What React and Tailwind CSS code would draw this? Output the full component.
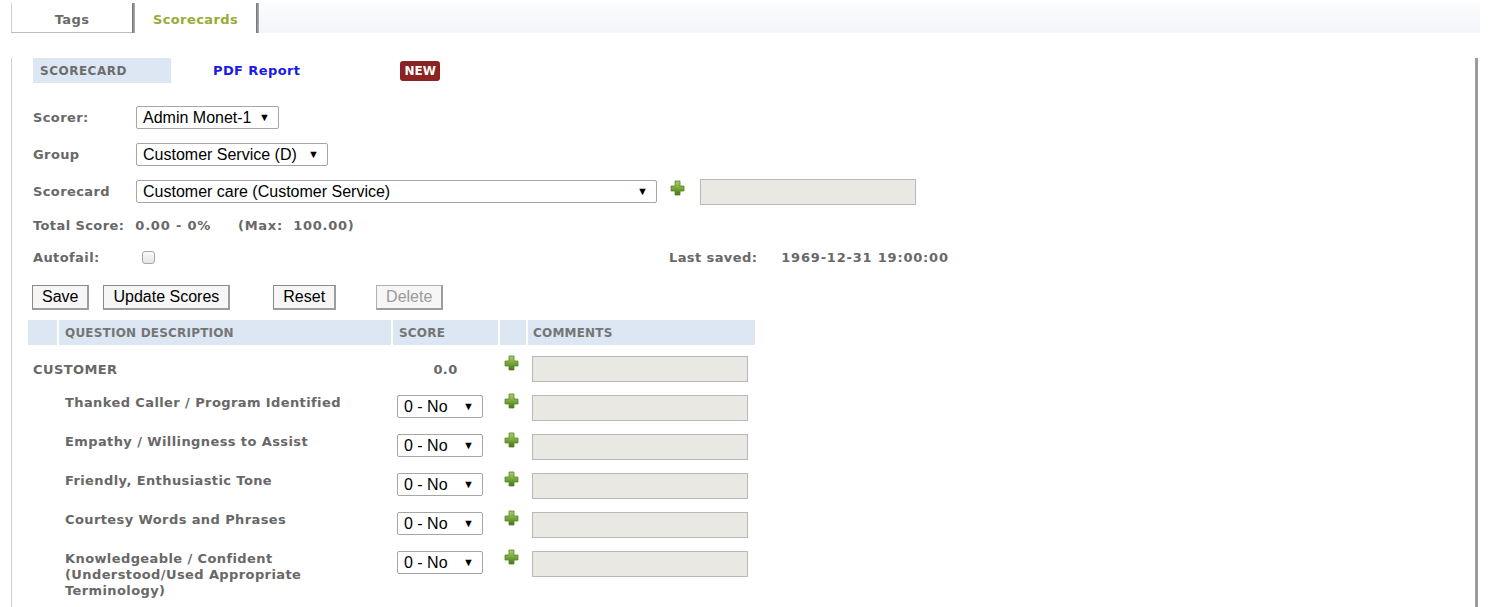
import React from 'react';

// shared font stacks
const verdana = "font-['DejaVu_Sans',Verdana,sans-serif]";
const arial = "font-['Liberation_Sans',Arial,sans-serif]";

const questions = [
  'Thanked Caller / Program Identified',
  'Empathy / Willingness to Assist',
  'Friendly, Enthusiastic Tone',
  'Courtesy Words and Phrases',
  'Knowledgeable / Confident (Understood/Used Appropriate Terminology)',
];

const PlusIcon = () => (
  <svg width="15" height="16" viewBox="0 0 15 16">
    <defs>
      <linearGradient id="plusGrad" x1="0" y1="0" x2="0" y2="1">
        <stop offset="0" stopColor="#a9cf68" />
        <stop offset="0.5" stopColor="#7aa83c" />
        <stop offset="1" stopColor="#44731a" />
      </linearGradient>
    </defs>
    <path d="M5 1h5v5h4v5h-4v4H5v-4H1V6h4z" fill="url(#plusGrad)" stroke="#56852a" strokeWidth="0.8" />
  </svg>
);

const FakeSelect = ({ value, width }) => (
  <div
    className={`flex items-center justify-between h-[23px] bg-white border border-[#a6a6a6] rounded-[2px] pl-[6px] pr-[8px] text-[16px] font-normal tracking-normal text-black ${arial}`}
    style={{ width }}
  >
    <span className="leading-none">{value}</span>
    <span className="text-[11px] leading-none">▼</span>
  </div>
);

const GrayInput = ({ width = 216, height = 26 }) => (
  <div className="bg-[#e9e8e2] border border-[#b8b8b8]" style={{ width, height }} />
);

const Button = ({ children, disabled }) => (
  <button
    className={`h-[25px] px-[9px] bg-[#f6f6f6] border border-[#8a8a8a] border-r-2 border-b-2 border-r-[#9d9d9d] border-b-[#9d9d9d] text-[16px] leading-none ${arial} ${
      disabled ? 'text-[#9a9a9a] border-[#b0b0b0]' : 'text-black'
    }`}
  >
    {children}
  </button>
);

const Label = ({ children }) => (
  <div className="w-[103px] text-[13px] tracking-[0.4px] font-bold text-[#686868]">{children}</div>
);

const App = () => {
  return (
    <div className={`w-[1490px] h-[607px] overflow-hidden bg-white ${verdana}`}>
      <div className="ml-[11px] w-[1469px] pt-[3px]">
        {/* Tabs */}
        <div className="flex h-[30px] text-[13px] tracking-[0.4px] font-bold">
          <div className="w-[121px] border-l border-[#cfcfcf] border-b border-b-[#bdbdbd] bg-white flex items-center justify-center pt-[4px] text-[#6a6a6a]">
            Tags
          </div>
          <div className="w-[3px] bg-gradient-to-r from-[#6f6f6f] to-[#b5b5b5]" />
          <div className="w-[121px] bg-white flex items-center justify-center pt-[4px] text-[#9aab35]">
            Scorecards
          </div>
          <div className="w-[3px] bg-gradient-to-r from-[#6f6f6f] to-[#b5b5b5]" />
          <div className="flex-1 bg-gradient-to-b from-[#fbfcfd] to-[#f3f5f9]" />
        </div>

        {/* Content frame */}
        <div className="w-[1467px] h-[580px] border-l border-[#cfcfcf] border-r-[3px] border-r-[#9c9c9c] pl-[21px]">
          <div className="flex items-center mt-[25px] h-[25px]">
            <div className="w-[138px] h-[25px] bg-[#dde7f4] flex items-center pl-[7px] text-[12px] tracking-[0.5px] font-bold text-[#6d6d6d]">
              SCORECARD
            </div>
            <div className="ml-[42px] text-[13px] tracking-[0.4px] font-bold text-[#1a1ae6]">PDF Report</div>
            <div className="ml-[100px] h-[20px] px-[4px] bg-[#8c2222] rounded-[3px] flex items-center text-[12px] font-bold text-white">
              NEW
            </div>
          </div>

          <div className="mt-[16px] flex flex-col">
            <div className="flex items-center h-[37px]">
              <Label>Scorer:</Label>
              <FakeSelect value="Admin Monet-1" width={143} />
            </div>
            <div className="flex items-center h-[37px]">
              <Label>Group</Label>
              <FakeSelect value="Customer Service (D)" width={192} />
            </div>
            <div className="flex items-center h-[37px]">
              <Label>Scorecard</Label>
              <FakeSelect value="Customer care (Customer Service)" width={521} />
              <div className="ml-[13px] -mt-[8px]">
                <PlusIcon />
              </div>
              <div className="ml-[15px]">
                <GrayInput width={216} />
              </div>
            </div>
            <div className="flex items-center h-[32px] text-[13px] tracking-[0.4px] font-bold text-[#686868]">
              <span>Total Score:</span>
              <span className="ml-[11px] tracking-[0.8px]">0.00 - 0%</span>
              <span className="ml-[27px] tracking-[0.7px]">(Max:&nbsp; 100.00)</span>
            </div>
            <div className="flex items-center h-[31px]">
              <Label>Autofail:</Label>
              <div className="ml-[6px] w-[13px] h-[13px] rounded-[3px] border border-[#a8a8a8] bg-gradient-to-b from-[#fafafa] to-[#e4e4e4]" />
              <div className="ml-[514px] text-[13px] tracking-[0.4px] font-bold text-[#686868]">Last saved:</div>
              <div className="ml-[24px] text-[13px] tracking-[0.8px] font-bold text-[#686868]">1969-12-31 19:00:00</div>
            </div>
          </div>

          {/* Buttons */}
          <div className="flex items-center mt-[12px] -ml-[1px]">
            <Button>Save</Button>
            <div className="ml-[14px]">
              <Button>Update Scores</Button>
            </div>
            <div className="ml-[43px]">
              <Button>Reset</Button>
            </div>
            <div className="ml-[40px]">
              <Button disabled>Delete</Button>
            </div>
          </div>

          {/* Table */}
          <div className="-ml-[5px] mt-[10px] w-[730px]">
            <div className="flex gap-[2px] h-[25px] text-[12px] tracking-[0.2px] font-bold text-[#757575]">
              <div className="w-[29px] bg-[#dde7f4]" />
              <div className="w-[332px] bg-[#dde7f4] flex items-center pl-[6px]">QUESTION DESCRIPTION</div>
              <div className="w-[105px] bg-[#dde7f4] flex items-center pl-[6px]">SCORE</div>
              <div className="w-[26px] bg-[#dde7f4]" />
              <div className="w-[227px] bg-[#dde7f4] flex items-center pl-[5px]">COMMENTS</div>
            </div>

            <div className="flex gap-[2px] h-[39px] mt-[7px] text-[13px] tracking-[0.4px] font-bold text-[#686868]">
              <div className="w-[363px] pl-[5px] flex items-center -mt-[3px]">CUSTOMER</div>
              <div className="w-[105px] flex items-center justify-center -mt-[3px]">0.0</div>
              <div className="w-[26px] pl-[4px] pt-[3px]">
                <PlusIcon />
              </div>
              <div className="w-[227px] pl-[4px] pt-[4px]">
                <GrayInput />
              </div>
            </div>

            {questions.map((q) => (
              <div key={q} className="flex gap-[2px] min-h-[39px] text-[13px] tracking-[0.4px] font-bold text-[#686868]">
                <div className="w-[29px]" />
                <div className="w-[332px] pl-[6px] pt-[4px] leading-[16px]">
                  <div className="w-[300px]">{q}</div>
                </div>
                <div className="w-[105px] pl-[4px] pt-[4px]">
                  <FakeSelect value="0 - No" width={86} />
                </div>
                <div className="w-[26px] pl-[4px] pt-[2px]">
                  <PlusIcon />
                </div>
                <div className="w-[227px] pl-[4px] pt-[4px]">
                  <GrayInput />
                </div>
              </div>
            ))}
          </div>
        </div>
      </div>
    </div>
  );
};

export default App;
